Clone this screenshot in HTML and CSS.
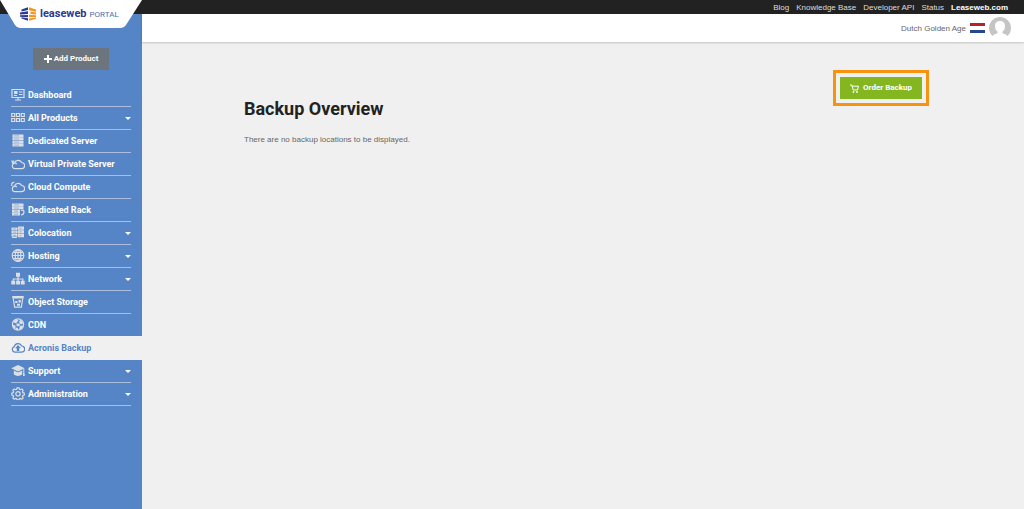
FILE: index.html
```html
<!DOCTYPE html>
<html lang="en">
<head>
<title>Leaseweb Portal - Backup Overview</title>
<meta charset="UTF-8">
<meta name="viewport" content="width=device-width,initial-scale=1.0">
<link rel="stylesheet" href="styles.css">
</head>
<body>
<header class="topbar">
	<a class="logo" href="#">
		<svg class="logo-plate" viewBox="0 0 142 28" aria-hidden="true"><path d="M0 0h142l-16 25q-2 3-5 3H20q-3 0-5-3z" fill="#fff"/></svg>
		<svg class="logo-mark" viewBox="0 0 17 14" aria-hidden="true">
			<path d="M8 .2L1.500 2.500v2L8 3zM8 4.200L0 5.500v2L8 7zM8 8L0 8.300v1.400l8 .6zM8 11.300l-6.500-1v1.200L8 13.800z" fill="#2b3990"/>
			<path d="M9 .2l7 2.300v2.300L9 3.200zM10.500 4.600l5.500 1v2l-5.500-.5zM9 7.800l7 .4V10l-7 .3zM9 11.400l7-.9v1.200l-7 2.100z" fill="#f7941d"/>
		</svg>
		<span class="logo-name">leaseweb</span>
		<span class="logo-sub">PORTAL</span>
	</a>
	<nav class="toplinks">
		<a href="#">Blog</a>
		<a href="#">Knowledge Base</a>
		<a href="#">Developer API</a>
		<a href="#">Status</a>
		<a href="#" class="strong">Leaseweb.com</a>
	</nav>
</header>
<div class="page">
	<aside class="sidebar">
		<button class="btn add" type="button"><svg viewBox="0 0 8 8" aria-hidden="true"><path d="M4 0v8M0 4h8" stroke="#fff" stroke-width="2"/></svg>Add Product</button>
		<nav class="menu">
			<a href="#"><svg viewBox="0 0 14 13"><path class="l" d="M1 1.500h12v8H1zM7 9.500v2.500M4 12h6M8 4h3.500M8 6.500h3.500M3 7.500h3"/><path d="M3 3h3.500v3H3z"/></svg><span>Dashboard</span></a>
			<a href="#" class="more"><svg viewBox="0 0 14 13"><path class="l" d="M.7 2.500h3v3h-3zM5.500 2.500h3v3h-3zM10.300 2.500h3v3h-3zM.7 7.500h3v3h-3zM5.500 7.500h3v3h-3zM10.300 7.500h3v3h-3z"/></svg><span>All Products</span></a>
			<a href="#"><svg viewBox="0 0 14 13"><path d="M1.500 .5h11v2.700h-11zM1.500 3.600h11v2.700h-11zM1.500 6.700h11v2.700h-11zM1.500 9.800h11v2.700h-11z"/><path class="d" d="M3 1.900h5M3 5h5M3 8.100h5M3 11.200h5"/></svg><span>Dedicated Server</span></a>
			<a href="#"><svg viewBox="0 0 14 13"><path class="l" d="M4 11.700a2.800 2.800 0 0 1-.6-5.500A3.900 3.900 0 0 1 10.600 5.500 3.100 3.100 0 0 1 10.500 11.700zM3.400 6.200q1.600-.4 2.300 1M.7 3.500l1 2.500 1.300-2.500"/></svg><span>Virtual Private Server</span></a>
			<a href="#"><svg viewBox="0 0 14 13"><path class="l" d="M4 11.700a2.800 2.800 0 0 1-.6-5.500A3.900 3.900 0 0 1 10.600 5.500 3.100 3.100 0 0 1 10.500 11.700zM3.400 6.200q1.600-.4 2.300 1M.8 6V4.300q0-2 2.500-2"/></svg><span>Cloud Compute</span></a>
			<a href="#"><svg viewBox="0 0 14 13"><path d="M1 .5h11.500v2.700H1zM1 3.600h11.500v2.700H1zM1 6.700h8v2.700H1zM1 9.800h8v2.700H1z"/><path class="d" d="M3 1.900h5M3 5h5M3 8.100h4M3 11.200h4"/><path class="l" d="M10 7.500q3-1 3 1.500t-3 3"/></svg><span>Dedicated Rack</span></a>
			<a href="#" class="more"><svg viewBox="0 0 14 13"><path d="M.5 1.500h6v2.700h-6zM.5 4.700h6v2.700h-6zM.5 7.900h6v2.700h-6zM7 .5h6v3.300H7zM7 4.200h6v3.300H7zM7 7.900h6v3.300H7zM1 11h5v1H1z"/><path class="d" d="M2 2.900h3M2 6.100h3M2 9.300h3M8.500 2.200h2M8.500 5.900h2M8.500 9.600h2"/></svg><span>Colocation</span></a>
			<a href="#" class="more"><svg viewBox="0 0 14 13"><circle class="l" cx="7" cy="6.500" r="5.800"/><ellipse class="l" cx="7" cy="6.500" rx="2.800" ry="5.800"/><path class="l" d="M7 .7v11.600M1.200 6.500h11.600M2.300 3.500h9.400M2.300 9.500h9.400"/></svg><span>Hosting</span></a>
			<a href="#" class="more"><svg viewBox="0 0 14 13"><path d="M5 .7h4v4H5zM.3 8.700h3.900v3.900H.3zM5.100 8.700H9v3.900H5.100zM9.800 8.700h3.900v3.900H9.800z"/><path class="l" d="M7 4.500v4.500M2.300 9V7h9.500v2"/></svg><span>Network</span></a>
			<a href="#"><svg viewBox="0 0 14 13"><path d="M1.300 1h11.400v2.500H1.300zM4.200 6h2.300v2H4.200zM7.500 5h2.300v2.500H7.500zM6 8.700h3v2H6z"/><path class="l" d="M2.300 3.500l1.300 8.700h6.800l1.300-8.700"/></svg><span>Object Storage</span></a>
			<a href="#"><svg viewBox="0 0 14 13"><circle class="l" cx="7" cy="6.500" r="5.600"/><path d="M2 4l3.500-3 2 1.500-2.500 3zM9 1.500l3.500 3.500-2.500 1.500L8 4.500zM5.500 5.500h3.200v2.700H5.500zM1.500 6.500l3 1 0 2.500-1.500.5zM9.500 7.500l3 .5-2.500 3.500-2-1zM5 9.500l2 .5v2.300l-2.500-.5z"/></svg><span>CDN</span></a>
			<a href="#" class="active" aria-current="page"><svg viewBox="0 0 14 13"><path class="l" d="M3.800 11.200a2.900 2.900 0 0 1-.5-5.600A3.900 3.900 0 0 1 10.700 5 3.100 3.100 0 0 1 10.500 11.200z"/><path d="M7 4l2.900 3.200H8.200V10H5.800V7.200H4.100z"/></svg><span>Acronis Backup</span></a>
			<a href="#" class="more"><svg viewBox="0 0 14 13"><path d="M7 1L.3 4.300 7 7.600l6.700-3.300zM2.800 6.500v4q4.200 2.800 8.400 0v-4L7 8.600zM12.300 5h1v5h-1zM12 9.500h1.700V12H12z"/></svg><span>Support</span></a>
			<a href="#" class="more"><svg viewBox="0 0 14 13"><path class="l" d="M6 .8h2l.4 1.500 1 .4 1.400-.8 1.400 1.400-.8 1.400.4 1 1.500.4v2l-1.500.4-.4 1 .8 1.300-1.400 1.400-1.400-.8-1 .4-.4 1H6l-.4-1-1-.4-1.400.8-1.400-1.400.8-1.300-.4-1L.8 8V6.100l1.400-.4.4-1-.8-1.400 1.400-1.400 1.400.8 1-.4z"/><circle class="l" cx="7" cy="6.800" r="2.200"/></svg><span>Administration</span></a>
		</nav>
	</aside>
	<div class="main">
		<div class="userbar">
			<span>Dutch Golden Age</span>
			<svg class="flag" viewBox="0 0 15 10" role="img" aria-label="Netherlands"><path d="M0 0h15v10H0z" fill="#fff"/><path d="M0 0h15v3H0z" fill="#b8202f"/><path d="M0 7h15v3H0z" fill="#26468f"/></svg>
			<svg class="avatar" viewBox="0 0 22 22" role="img" aria-label="Account"><path d="M3.500 19a11 11 0 1 1 15 0q-1.500-2-5-2.800v-1.600c1.500-1 2.500-3 2.500-5.600 0-3.500-2-5-5-5s-5 1.500-5 5c0 2.600 1 4.600 2.500 5.600v1.600Q5 17 3.500 19z" fill="#c5c5c5"/></svg>
		</div>
		<main class="content">
			<div class="actions">
				<button class="btn order" type="button"><svg viewBox="0 0 9 9" aria-hidden="true"><path d="M0 1h1.800l1.400 5h4.300l1-3.800H2.200" fill="none" stroke="#fff"/><circle cx="3.500" cy="8" r=".9" fill="#fff"/><circle cx="7" cy="8" r=".9" fill="#fff"/></svg>Order Backup</button>
			</div>
			<h1>Backup Overview</h1>
			<p>There are no backup locations to be displayed.</p>
		</main>
	</div>
</div>
</body>
</html>
```
FILE: styles.css
```css
*{
	margin:0;
	padding:0;
	box-sizing:border-box;
}

body{
	display:flex;
	flex-direction:column;
	min-height:100vh;
	background:#f0f0f0;
	color:#666;
	font:8px/12px "Liberation Sans",Arial,sans-serif;
}
a{color:inherit;text-decoration:none}
svg{display:block;flex:none}

.topbar{
	position:relative;
	display:flex;
	justify-content:flex-end;
	height:14px;
	background:#222;
}
.toplinks{
	display:flex;
	align-items:center;
	gap:7px;
	padding:2px 16px 0;
	color:#ddd;
}
.toplinks .strong{color:#fff;font-weight:bold}

/* white plate hangs over the sidebar */
.logo{
	position:absolute;
	top:0;
	left:0;
	display:flex;
	align-items:center;
	width:142px;
	height:28px;
	padding-left:20px;
	font-family:Roboto,sans-serif;
	white-space:nowrap;
}
.logo-plate{position:absolute;top:0;left:0;width:142px;height:28px}
.logo-mark{position:relative;width:17px;height:14px}
.logo-name{position:relative;margin-left:3px;color:#2b3990;font-size:11px;font-weight:bold}
.logo-sub{position:relative;margin:2px 0 0 3px;color:#4a6eb0;font-size:8px}

.page{
	display:flex;
	flex:1;
}
.sidebar{
	display:flex;
	flex-direction:column;
	flex:none;
	width:142px;
	padding-top:34px;
	background:#5585c6;
}

.btn{
	display:flex;
	align-items:center;
	justify-content:center;
	height:22px;
	border:none;
	color:#fff;
	font:bold 8px/12px Roboto,sans-serif;
	cursor:pointer;
}
.add{
	align-self:center;
	gap:2px;
	width:76px;
	background:#6c757d;
}
.add svg{width:8px;height:8px}

.menu{padding-top:14px}
.menu a{
	display:flex;
	align-items:center;
	gap:3px;
	height:23px;
	margin:0 11px;
	border-bottom:1px solid #aabfdf;
	color:#fff;
	font:bold 9px/12px Roboto,sans-serif;
}
.menu svg{width:14px;height:13px;margin-bottom:1px;fill:#dcdfe4}
.menu .l{fill:none;stroke:#dcdfe4;stroke-width:1.2}
.menu .d{fill:none;stroke:#5585c6;stroke-width:.5}
.menu .more::after{
	content:"";
	margin-left:auto;
	border:3px solid transparent;
	border-top-color:#fff;
	border-bottom:0;
}
/* covers the divider of the row above */
.menu .active{
	position:relative;
	height:24px;
	margin:-1px 0 0;
	padding:0 11px;
	border:none;
	background:#f0f0f0;
	color:#5585c6;
}
.menu .active svg{fill:#5585c6}
.menu .active .l{stroke:#5585c6}

.main{
	flex:1;
	min-width:0;
}
.userbar{
	display:flex;
	align-items:center;
	justify-content:flex-end;
	gap:4px;
	height:28px;
	padding:0 13px;
	background:#fff;
	box-shadow:0 1px 2px rgba(0,0,0,0.2);
}
.userbar span{padding-top:2px}
.flag{width:15px;height:10px}
.avatar{width:22px;height:22px}

.content{padding:35px 102px 0}
.actions{
	display:flex;
	justify-content:flex-end;
}
.order{
	gap:4px;
	width:82px;
	background:#84b71f;
	outline:3px solid #f7930f;
	outline-offset:4px;
}
.order svg{width:9px;height:9px}

h1{
	color:#222;
	font:bold 18px/20px Roboto,sans-serif;
}
p{margin-top:15px}
```
